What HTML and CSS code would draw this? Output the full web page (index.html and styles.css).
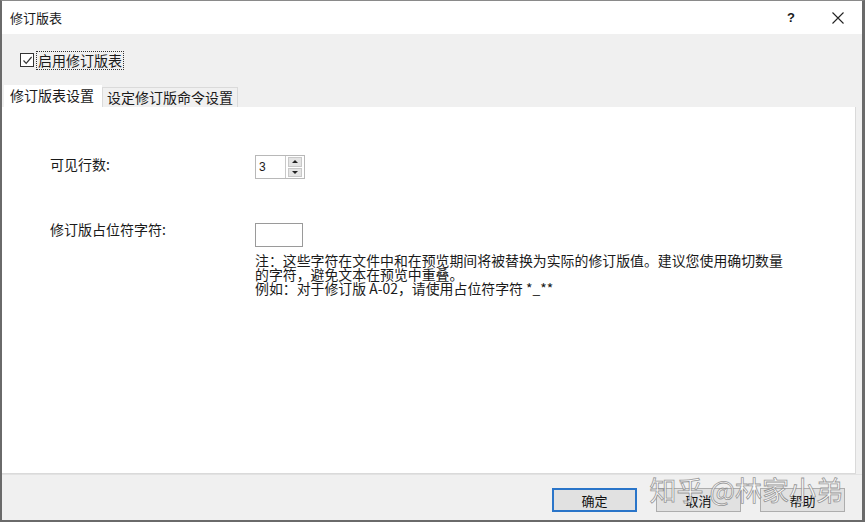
FILE: index.html
```html
<!DOCTYPE html>
<html lang="zh-CN">

<head>
    <meta charset="UTF-8">
    <title>修订版表</title>
    <link rel="stylesheet" href="styles.css">
</head>

<body>
    <div class="dialog">
        <div class="title-bar">
            <span class="title">修订版表</span>
            <span class="title-help">?</span>
            <span class="title-close">
                <svg width="12" height="12" viewBox="0 0 12 12">
                    <path d="M0.5 0.5 L11.5 11.5 M11.5 0.5 L0.5 11.5" stroke="#222" stroke-width="1.1" fill="none"/>
                </svg>
            </span>
        </div>

        <div class="body">
            <div class="enable-row">
                <span class="checkbox">
                    <svg width="11" height="11" viewBox="0 0 11 11">
                        <path d="M1.5 5.5 L4.2 8.3 L9.6 2" stroke="#333" stroke-width="1.2" fill="none"/>
                    </svg>
                </span>
                <span class="enable-label">启用修订版表</span>
            </div>

            <div class="tabs">
                <div class="tab active">修订版表设置</div>
                <div class="tab">设定修订版命令设置</div>
            </div>

            <div class="panel">
                <div class="field-row rows">
                    <div class="field-label">可见行数:</div>
                    <div class="spinner">
                        <div class="spinner-value">3</div>
                        <div class="spinner-buttons">
                            <div class="spin-btn"><span class="arrow-up"></span></div>
                            <div class="spin-btn"><span class="arrow-down"></span></div>
                        </div>
                    </div>
                </div>

                <div class="field-row placeholder">
                    <div class="field-label">修订版占位符字符:</div>
                    <div class="field-body">
                        <div class="text-box"></div>
                        <div class="note">
                            注：这些字符在文件中和在预览期间将被替换为实际的修订版值。建议您使用确切数量<br>
                            的字符，避免文本在预览中重叠。<br>
                            例如：对于修订版 A-02，请使用占位符字符 *_**
                        </div>
                    </div>
                </div>
            </div>

            <div class="footer">
                <button class="btn default">确定</button>
                <button class="btn">取消</button>
                <button class="btn">帮助</button>
                <div class="watermark">知乎 @林家小弟</div>
            </div>
        </div>
    </div>
</body>

</html>
```

FILE: styles.css
```css
body {
    margin: 0;
    padding: 0;
    font-family: 'Noto Sans CJK SC', 'Noto Sans', sans-serif;
    color: #1a1a1a;
    background: #ffffff;
}

.dialog {
    width: 865px;
    height: 522px;
    box-sizing: border-box;
    display: flex;
    flex-direction: column;
    border-top: 1px solid #8a8a8a;
    border-left: 2px solid #6a6a6a;
    border-right: 3px solid #6a6a6a;
    border-bottom: 2px solid #6a6a6a;
}

.title-bar {
    height: 33px;
    background: #ffffff;
    display: flex;
    align-items: center;
    padding-left: 8px;
    font-size: 13px;
}

.title {
    flex: 1;
}

.title-help {
    font-family: 'Liberation Sans', sans-serif;
    font-weight: bold;
    font-size: 13px;
    width: 20px;
    text-align: center;
    margin-right: 31px;
}

.title-close {
    display: flex;
    width: 12px;
    margin-right: 18px;
}

.body {
    flex: 1;
    background: #f0f0f0;
    display: flex;
    flex-direction: column;
    position: relative;
}

.enable-row {
    display: flex;
    align-items: center;
    height: 20px;
    margin-top: 16px;
    padding-left: 18px;
}

.checkbox {
    width: 12px;
    height: 12px;
    border: 1px solid #333;
    background: #fff;
    display: flex;
    align-items: center;
    justify-content: center;
    margin-right: 2px;
}

.enable-label {
    font-size: 14px;
    line-height: 17px;
    border: 1px dotted #333;
    padding: 0 1px;
}

.tabs {
    display: flex;
    align-items: flex-end;
    margin-top: 15px;
    padding-left: 2px;
    height: 22px;
}

.tab {
    font-size: 14px;
    height: 19px;
    line-height: 19px;
    padding: 0 4px;
    border: 1px solid #dadada;
    border-bottom: none;
    background: #f0f0f0;
}

.tab.active {
    height: 22px;
    line-height: 20px;
    background: #ffffff;
    padding: 0 8px 0 6px;
    border: none;
}

.panel {
    height: 366px;
    margin-right: 6px;
    background: #ffffff;
    border: 1px solid #dadada;
    border-left: none;
    border-top: none;
}

.field-row {
    display: flex;
    padding-left: 48px;
}

.field-label {
    width: 205px;
    font-size: 14px;
}

.rows {
    margin-top: 48px;
    align-items: center;
}

.rows .field-label {
    margin-top: -6px;
}

.spinner {
    display: flex;
    height: 22px;
    border: 1px solid #b8b8b8;
    width: 48px;
    background: #fff;
}

.spinner-value {
    width: 30px;
    line-height: 22px;
    padding-left: 3px;
    font-family: 'Liberation Sans', sans-serif;
    font-size: 12px;
    border-right: 1px solid #c8c8c8;
    box-sizing: border-box;
}

.spinner-buttons {
    flex: 1;
    display: flex;
    flex-direction: column;
    gap: 1px;
    padding: 1px 2px;
}

.spin-btn {
    flex: 1;
    background: #e4e4e4;
    border: 1px solid #c8c8c8;
    display: flex;
    align-items: center;
    justify-content: center;
}

.arrow-up {
    width: 0;
    height: 0;
    border-left: 3px solid transparent;
    border-right: 3px solid transparent;
    border-bottom: 3px solid #222;
}

.arrow-down {
    width: 0;
    height: 0;
    border-left: 3px solid transparent;
    border-right: 3px solid transparent;
    border-top: 3px solid #222;
}

.placeholder {
    margin-top: 44px;
}

.placeholder .field-label {
    margin-top: -4px;
}

.field-body {
    display: flex;
    flex-direction: column;
}

.text-box {
    width: 46px;
    height: 22px;
    border: 1px solid #9a9a9a;
    background: #fff;
}

.note {
    margin-top: 6px;
    font-size: 13.9px;
    line-height: 14px;
}

.footer {
    flex: 1;
    display: flex;
    justify-content: flex-end;
    align-items: center;
    gap: 19px;
    padding-right: 17px;
    border-top: 1px solid #e2e2e2;
}

.btn {
    width: 85px;
    height: 24px;
    font-family: 'Noto Sans CJK SC', sans-serif;
    font-size: 13px;
    background: #e1e1e1;
    border: 1px solid #adadad;
    color: #111;
    padding: 0;
    margin-top: 5px;
}

.btn.default {
    border: 2px solid #2a75c9;
}

.watermark {
    position: absolute;
    right: 19px;
    bottom: 11px;
    font-size: 27px;
    letter-spacing: 0;
    color: #ffffff;
    -webkit-text-stroke: 0.8px #8a8a8a;
    opacity: 0.85;
    pointer-events: none;
}
```
